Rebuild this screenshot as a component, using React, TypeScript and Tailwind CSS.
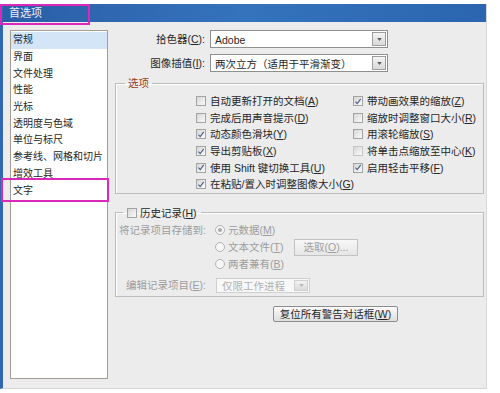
import React from 'react';

const listItems = [
  '常规',
  '界面',
  '文件处理',
  '性能',
  '光标',
  '透明度与色域',
  '单位与标尺',
  '参考线、网格和切片',
  '增效工具',
  '文字',
];

// 带下划线的快捷键标签，如 拾色器(C)
function KeyLabel({ text, k, tail = '' }: { text: string; k: string; tail?: string }) {
  return (
    <span className="whitespace-nowrap">
      {text}(<span className="underline underline-offset-1">{k}</span>){tail}
    </span>
  );
}

function Check({ checked, dim }: { checked?: boolean; dim?: boolean }) {
  return (
    <span
      className={`inline-flex h-[10px] w-[10px] shrink-0 items-center justify-center border bg-linear-to-br from-[#d6d6d6] to-[#fbfbfb] ${
        dim ? 'border-[#c6c6c6]' : 'border-[#a3a3a3]'
      }`}
    >
      {checked && (
        <svg viewBox="0 0 10 10" className="h-[9px] w-[9px]">
          <path d="M1.8 5.2 L4 7.6 L8.4 1.8" fill="none" stroke="#4d6290" strokeWidth="1.5" />
        </svg>
      )}
    </span>
  );
}

function Radio({ on }: { on?: boolean }) {
  return (
    <span className="inline-flex h-[10px] w-[10px] shrink-0 items-center justify-center rounded-full border border-[#b4b4b4] bg-[#f6f6f6]">
      {on && <span className="h-[4px] w-[4px] rounded-full bg-[#a8a8a8]" />}
    </span>
  );
}

function CheckRow({ text, k, checked, dim }: { text: string; k: string; checked?: boolean; dim?: boolean }) {
  return (
    <div className="flex h-[16.6px] items-center gap-[4px]">
      <Check checked={checked} dim={dim} />
      <KeyLabel text={text} k={k} />
    </div>
  );
}

function DropArrow({ dim }: { dim?: boolean }) {
  return (
    <span
      className={`flex w-[14px] shrink-0 items-center justify-center border bg-linear-to-b from-[#f4f4f4] to-[#d9d9d9] ${
        dim ? 'border-[#cfcfcf]' : 'border-[#9e9e9e]'
      }`}
    >
      <svg viewBox="0 0 6 4" className="h-[3px] w-[5px]">
        <path d="M0 0 L6 0 L3 4 Z" fill={dim ? '#b8b8b8' : '#5a5a5a'} />
      </svg>
    </span>
  );
}

function SelectRow({ label, k, value }: { label: string; k: string; value: string }) {
  return (
    <div className="flex h-[18px] items-center">
      <div className="w-[91px] pr-[1px] text-right">
        <KeyLabel text={label} k={k} tail=":" />
      </div>
      <div className="ml-[4px] flex h-full w-[178px] border border-[#8f8f8f] bg-white pr-[1px] py-[1px]">
        <span className="flex-1 pl-[4px] leading-[16px]">{value}</span>
        <DropArrow />
      </div>
    </div>
  );
}

export default function App() {
  return (
    <div className="relative h-[393px] w-[500px] bg-white pt-[4px] text-[10.5px] leading-[14px] text-[#262626] font-['Liberation_Sans','Noto_Sans_CJK_SC',sans-serif]">
      <div className="flex h-[385px] w-[487px] flex-col border-b border-l-[3px] border-r border-b-[#d4d4d4] border-l-[#2f67b0] border-r-[#d8d8d8] bg-[#ececec]">
        {/* 标题栏 */}
        <div className="flex h-[18px] shrink-0 items-center bg-linear-to-r from-[#2a5ea6] via-[#3573bd] to-[#2b65b0] pl-[6px] text-[11px] text-[#e8eefa]">
          首选项
        </div>

        <div className="flex flex-1">
          {/* 左侧列表 */}
          <div className="mb-[9px] ml-[7px] mt-[8px] w-[98px] border border-[#a39d94] bg-white pt-[1px] text-[10px]">
            {listItems.map((item, i) => (
              <div
                key={item}
                className={`flex h-[16.7px] items-center pl-[2px] whitespace-nowrap ${i === 0 ? 'bg-[#d3e5f7]' : ''}`}
              >
                {item}
              </div>
            ))}
          </div>

          {/* 右侧内容 */}
          <div className="ml-[7px] flex w-[369px] flex-col pt-[8px]">
            <div className="flex flex-col gap-[6px]">
              <SelectRow label="拾色器" k="C" value="Adobe" />
              <SelectRow label="图像插值" k="I" value="两次立方（适用于平滑渐变）" />
            </div>

            <fieldset className="mt-[4px] border border-[#bcbcbc] shadow-[inset_1px_1px_0_#fff]">
              <legend className="ml-[9px] px-[3px] text-[#9a3b22]">选项</legend>
              <div className="flex pl-[80px] pt-[3px]">
                <div className="w-[157px]">
                  <CheckRow text="自动更新打开的文档" k="A" />
                  <CheckRow text="完成后用声音提示" k="D" />
                  <CheckRow text="动态颜色滑块" k="Y" checked />
                  <CheckRow text="导出剪贴板" k="X" checked />
                  <CheckRow text="使用 Shift 键切换工具" k="U" checked />
                  <CheckRow text="在粘贴/置入时调整图像大小" k="G" checked />
                </div>
                <div>
                  <CheckRow text="带动画效果的缩放" k="Z" checked />
                  <CheckRow text="缩放时调整窗口大小" k="R" />
                  <CheckRow text="用滚轮缩放" k="S" />
                  <CheckRow text="将单击点缩放至中心" k="K" dim />
                  <CheckRow text="启用轻击平移" k="F" checked />
                </div>
              </div>
            </fieldset>

            <fieldset className="mt-[12px] border border-[#bcbcbc] shadow-[inset_1px_1px_0_#fff]">
              <legend className="ml-[7px] flex items-center gap-[3px] px-[4px]">
                <Check />
                <KeyLabel text="历史记录" k="H" />
              </legend>
              <div className="flex flex-col pb-[3px] pt-[2px] text-[#9d9d9d]">
                <div className="flex">
                  <div className="w-[90px] pt-[1px] text-right">将记录项目存储到:</div>
                  <div className="ml-[9px] flex flex-col">
                    <div className="flex h-[17px] items-center gap-[3px]">
                      <Radio on />
                      <KeyLabel text="元数据" k="M" />
                    </div>
                    <div className="flex h-[17px] items-center">
                      <div className="flex w-[79px] items-center gap-[3px]">
                        <Radio />
                        <KeyLabel text="文本文件" k="T" />
                      </div>
                      <button
                        type="button"
                        className="flex h-[17px] w-[64px] items-center justify-center border border-[#c2c2c2] bg-linear-to-b from-[#f7f7f7] to-[#e6e6e6] text-[#a0a0a0]"
                      >
                        <KeyLabel text="选取" k="O" tail="..." />
                      </button>
                    </div>
                    <div className="flex h-[17px] items-center gap-[3px]">
                      <Radio />
                      <KeyLabel text="两者兼有" k="B" />
                    </div>
                  </div>
                </div>
                <div className="mt-[5px] flex h-[15px] items-center">
                  <div className="w-[90px] text-right">
                    <KeyLabel text="编辑记录项目" k="E" tail=":" />
                  </div>
                  <div className="ml-[10px] flex h-full w-[94px] border border-[#cfcfcf] bg-[#f8f8f8] py-[1px] pr-[1px]">
                    <span className="flex-1 pl-[5px] leading-[13px] text-[#b0b0b0]">仅限工作进程</span>
                    <DropArrow dim />
                  </div>
                </div>
              </div>
            </fieldset>

            <button
              type="button"
              className="ml-[158px] mt-[9px] flex h-[16px] w-[125px] items-center justify-center rounded-[2px] border border-[#8d8d8d] bg-linear-to-b from-[#fbfbfb] to-[#dedede] text-[#262626]"
            >
              <KeyLabel text="复位所有警告对话框" k="W" />
            </button>
          </div>
        </div>
      </div>

      {/* 标注框 */}
      <div className="absolute left-0 top-[4px] h-[21px] w-[90px] border-[2.5px] border-[#dc28b8]" />
      <div className="absolute left-[1px] top-[178px] h-[24px] w-[108px] border-[2.5px] border-[#dc28b8]" />
    </div>
  );
}
